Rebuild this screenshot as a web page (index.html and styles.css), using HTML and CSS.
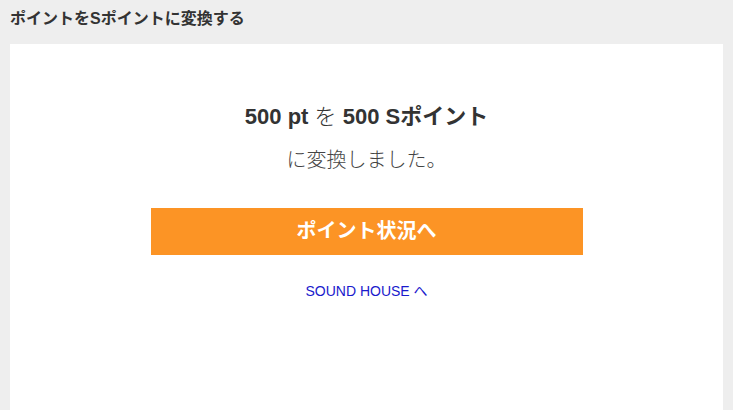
FILE: index.html
```html
<!DOCTYPE html>
<html lang="ja">
<head>
    <meta charset="UTF-8">
    <meta name="viewport" content="width=device-width, initial-scale=1.0">
    <title>ポイントをSポイントに変換する</title>
    <link rel="stylesheet" href="styles.css">
</head>
<body>
    <h2 class="page-title">ポイントをSポイントに変換する</h2>
    <div class="panel">
        <p class="result"><b>500 pt</b> を <b>500 Sポイント</b></p>
        <p class="result-sub">に変換しました。</p>
        <a class="btn-status" href="#">ポイント状況へ</a>
        <a class="link-home" href="#">SOUND HOUSE へ</a>
    </div>
</body>
</html>
```

FILE: styles.css
```css
html, body {
    height: 100%;
}
body {
    margin: 0;
    padding: 0 10px;
    background: #eeeeee;
    font-family: "Liberation Sans", Arial, "Noto Sans CJK JP", sans-serif;
    color: #333;
    display: flex;
    flex-direction: column;
    box-sizing: border-box;
}
.page-title {
    margin: 0;
    padding: 9px 0 0;
    height: 35px;
    font-size: 16px;
    line-height: 20px;
    font-weight: bold;
    color: #333;
}
.panel {
    flex: 1;
    background: #fff;
    display: flex;
    flex-direction: column;
    align-items: center;
    padding-top: 58px;
}
.result {
    margin: 0;
    font-size: 22px;
    line-height: 30px;
    font-weight: 300;
}
.result b {
    font-weight: bold;
}
.result-sub {
    margin: 14px 0 0;
    font-size: 20px;
    line-height: 28px;
    font-weight: 300;
    color: #444;
}
.btn-status {
    display: block;
    margin-top: 34px;
    width: 432px;
    height: 47px;
    line-height: 47px;
    background: #fc9425;
    color: #fff;
    text-align: center;
    font-size: 20px;
    font-weight: bold;
    text-decoration: none;
}
.link-home {
    margin-top: 28px;
    font-size: 14px;
    line-height: 16px;
    color: #1a1acc;
    text-decoration: none;
}
```
